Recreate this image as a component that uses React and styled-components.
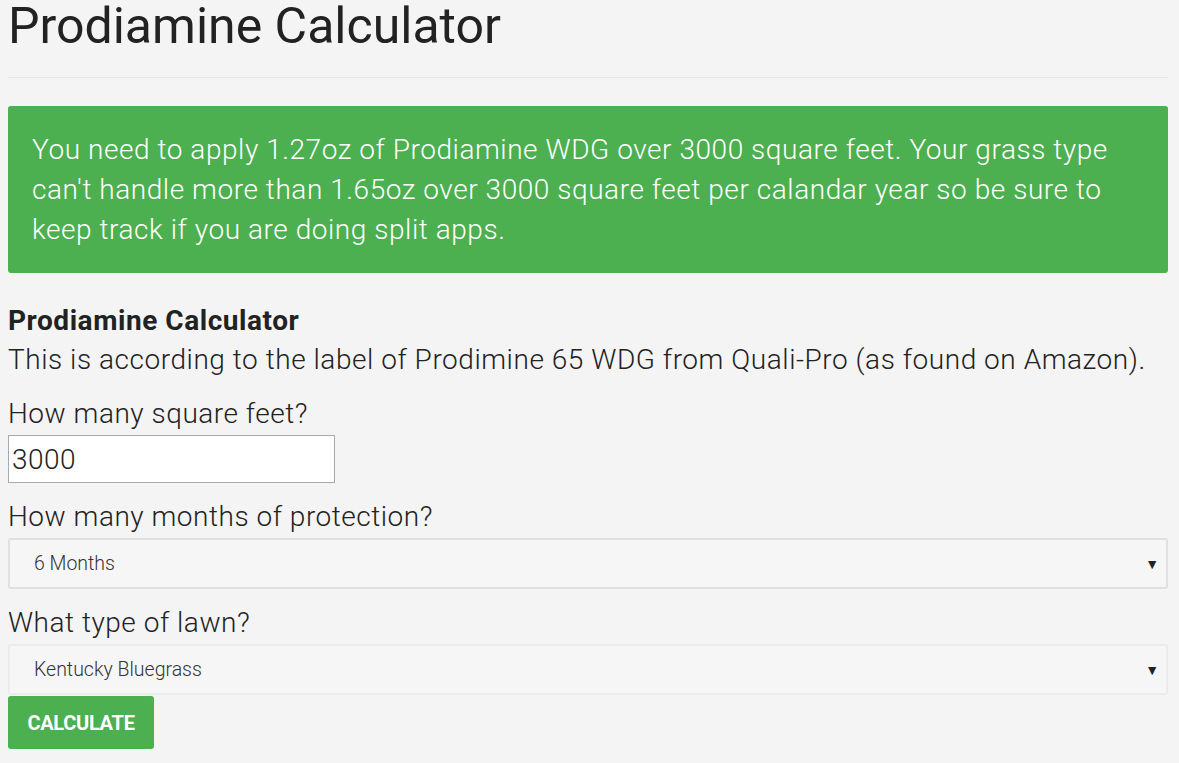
import React, { useState } from "react";
import styled, { createGlobalStyle } from "styled-components";

const GlobalStyle = createGlobalStyle`
  html, body {
    margin: 0;
    padding: 0;
    background: #f4f4f4;
  }
  body {
    font-family: Roboto, "Liberation Sans", sans-serif;
    color: #222;
  }
`;

function App() {
  const [feet, setFeet] = useState("3000");
  const [months, setMonths] = useState("6");
  const [lawn, setLawn] = useState("kbg");

  return (
    <Page>
      <GlobalStyle />
      <Title>Prodiamine Calculator</Title>
      <Rule />
      <Result>
        You need to apply 1.27oz of Prodiamine WDG over 3000 square feet. Your grass type<br />
        can't handle more than 1.65oz over 3000 square feet per calandar year so be sure to<br />
        keep track if you are doing split apps.
      </Result>
      <Heading>Prodiamine Calculator</Heading>
      <Intro>
        This is according to the label of Prodimine 65 WDG from Quali-Pro (as found on Amazon).
      </Intro>
      <Label>How many square feet?</Label>
      <NumberInput value={feet} onChange={e => setFeet(e.target.value)} />
      <Label>How many months of protection?</Label>
      <SelectWrap>
        <Select strong value={months} onChange={e => setMonths(e.target.value)}>
          <option value="3">3 Months</option>
          <option value="6">6 Months</option>
          <option value="9">9 Months</option>
        </Select>
        <Arrow>▼</Arrow>
      </SelectWrap>
      <Label>What type of lawn?</Label>
      <SelectWrap>
        <Select value={lawn} onChange={e => setLawn(e.target.value)}>
          <option value="kbg">Kentucky Bluegrass</option>
          <option value="tttf">Tall Fescue</option>
          <option value="bermuda">Bermudagrass</option>
        </Select>
        <Arrow>▼</Arrow>
      </SelectWrap>
      <Button>CALCULATE</Button>
    </Page>
  );
}

const Page = styled.main`
  width: 1160px;
  padding: 0 11px 0 8px;
  display: flex;
  flex-direction: column;
  align-items: flex-start;
`;

const Title = styled.h1`
  margin: 0;
  padding-top: 1px;
  font-size: 50px;
  font-weight: 400;
  line-height: 50px;
  color: #222;
`;

const Rule = styled.hr`
  align-self: stretch;
  margin: 26px 0 28px;
  border: 0;
  border-top: 1px solid #e6e6e6;
`;

const Result = styled.div`
  align-self: stretch;
  background: #4caf50;
  color: #fff;
  border-radius: 3px;
  padding: 24px 24px 23px;
  font-size: 28px;
  font-weight: 300;
  letter-spacing: 0.55px;
  line-height: 40px;
  white-space: nowrap;
`;

const Heading = styled.h3`
  margin: 31px 0 0;
  font-size: 28px;
  font-weight: 700;
  letter-spacing: 0.55px;
  line-height: 34px;
  color: #222;
`;

const Intro = styled.p`
  margin: 2px 0 0;
  font-size: 28px;
  font-weight: 300;
  letter-spacing: 0.54px;
  line-height: 40px;
`;

const Label = styled.label`
  margin-top: 14px;
  font-size: 28px;
  font-weight: 300;
  letter-spacing: 0.52px;
  line-height: 40px;
  & + input {
    margin-top: 1px;
  }
`;

const NumberInput = styled.input`
  box-sizing: border-box;
  width: 327px;
  height: 48px;
  padding: 0 3px;
  border: 1px solid #a9a9a9;
  background: #fff;
  font-family: Roboto, "Liberation Sans", sans-serif;
  font-size: 28px;
  font-weight: 300;
  letter-spacing: 0.5px;
  color: #222;
  outline: none;
`;

const SelectWrap = styled.div`
  position: relative;
  align-self: stretch;
  margin-top: 1px;
`;

const Select = styled.select`
  display: block;
  box-sizing: border-box;
  width: 100%;
  height: 51px;
  appearance: none;
  -webkit-appearance: none;
  padding: 0 24px;
  border: 2px solid ${p => (p.strong ? "#e0e0e0" : "#ececec")};
  border-radius: 3px;
  background: #f6f6f6;
  font-family: Roboto, "Liberation Sans", sans-serif;
  font-size: 19.5px;
  font-weight: 300;
  color: #333;
  outline: none;
`;

const Arrow = styled.span`
  position: absolute;
  right: 9px;
  top: 50%;
  transform: translateY(-50%);
  font-size: 14px;
  color: #222;
  pointer-events: none;
`;

const Button = styled.button`
  margin-top: 1px;
  width: 146px;
  height: 53px;
  border: 0;
  border-radius: 3px;
  background: #4caf50;
  color: #fff;
  font-family: Roboto, "Liberation Sans", sans-serif;
  font-size: 20px;
  font-weight: 700;
  letter-spacing: -0.3px;
  cursor: pointer;
`;

export default App;
